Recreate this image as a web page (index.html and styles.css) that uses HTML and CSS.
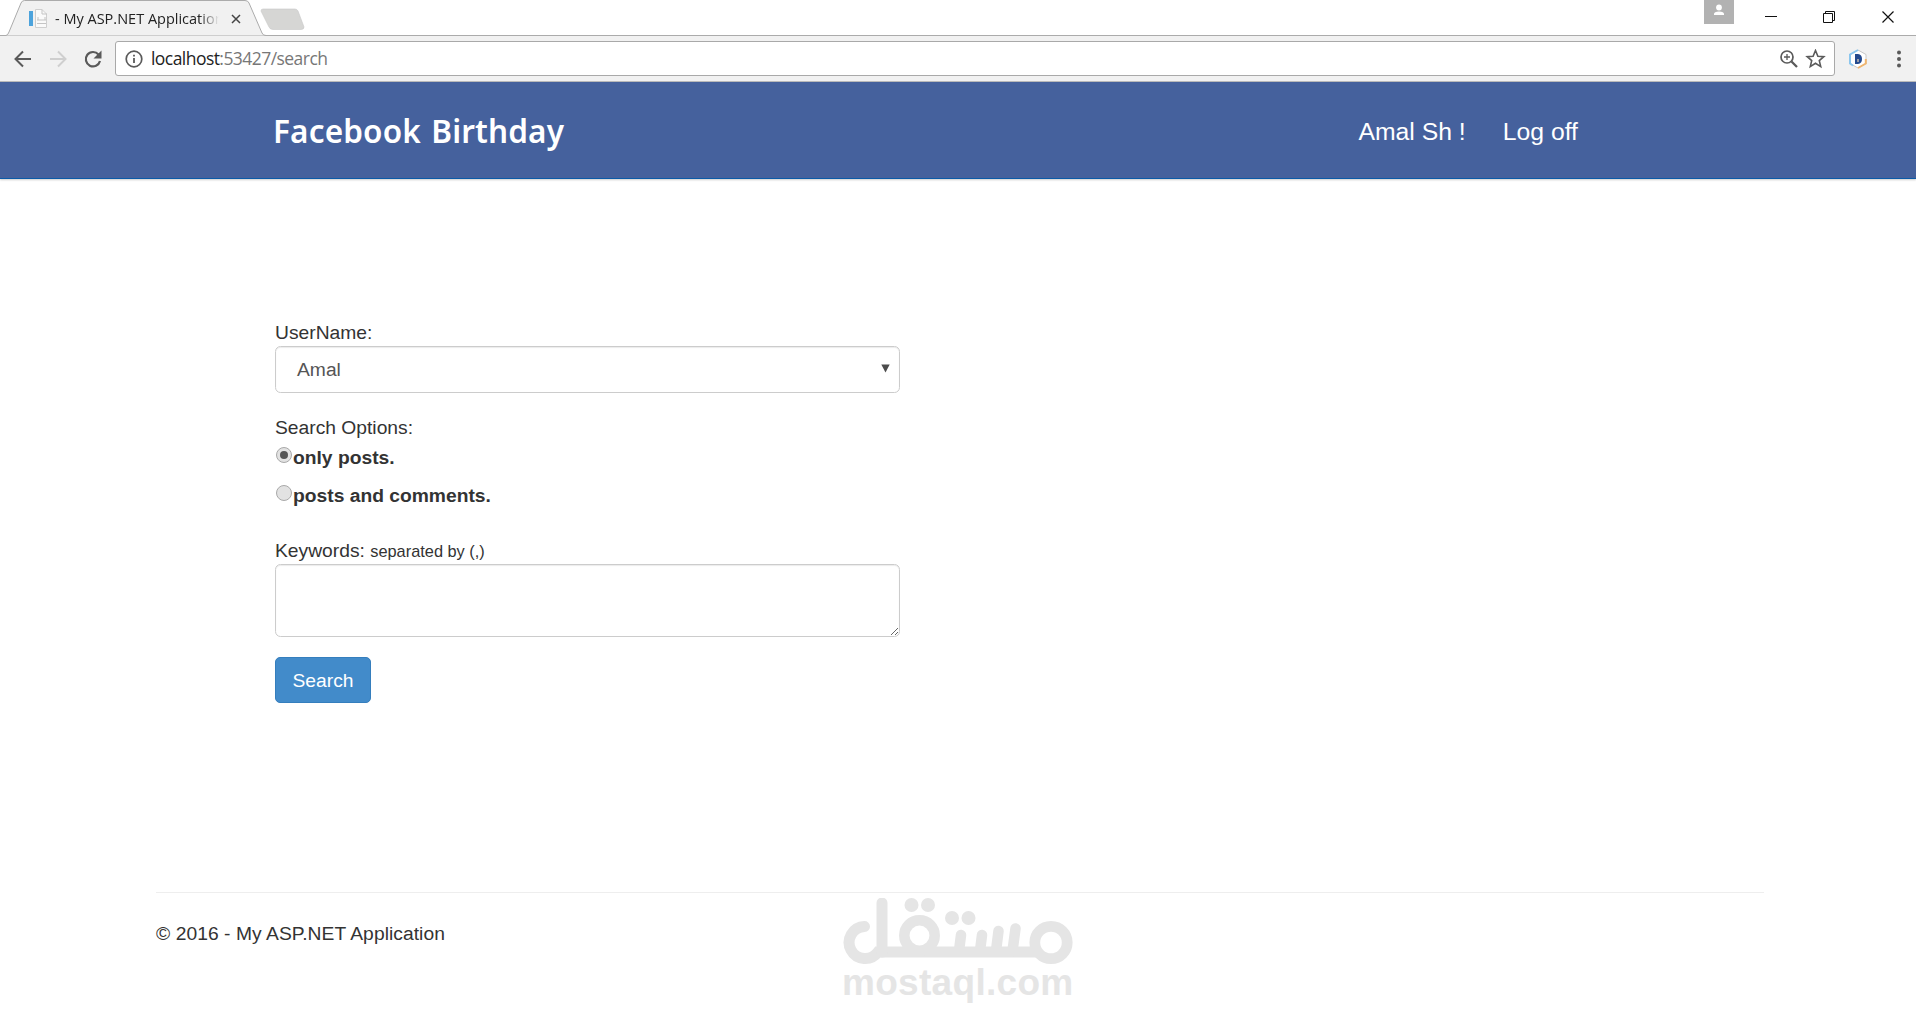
FILE: index.html
```html
<!DOCTYPE html>
<html lang="en">
<head>
<meta charset="utf-8">
<title>- My ASP.NET Application</title>
<link rel="stylesheet" href="styles.css">
</head>
<body>
<div class="tabstrip">
  <svg class="tabshape" width="310" height="36" viewBox="0 0 310 36">
    <path d="M0 35.500H6Q8 35 9 32L21 3Q22 .5 24.500 .5H245Q248 .5 249 3L262 33Q263 35.500 266 35.500H310V36H0Z" fill="#f1f1f1" stroke="#ababab"/>
    <path d="M263 9H295Q297 9 298 11L304 27Q304 29.500 301 29.500H273Q270 29.500 269 27L261 11Q261 9 263 9Z" fill="#d6d6d4" stroke="#c8c8c8" stroke-width=".6"/>
  </svg>
  <div class="tab">
    <svg class="favicon" width="20" height="20" viewBox="0 0 20 20"><path d="M1 2H5V17H1Z" fill="#4ca3dc"/><path d="M7.500.500H14L18.500 5V18.500H7.500Z" fill="#fafafa" stroke="#cfcfcf"/><path d="M14 .5V5H19M9 11H18M9 14.500H18M10 8V11M17 8V11" stroke="#c4c4c4" fill="none"/></svg>
    <span class="title">- My ASP.NET Application</span>
    <svg class="tabclose" width="10" height="10" viewBox="0 0 10 10"><path d="M1 1L9 9M9 1L1 9" stroke="#444" stroke-width="1.500"/></svg>
  </div>
  <div class="winctl">
    <span class="person"><svg width="30" height="24" viewBox="0 0 30 24"><circle cx="15" cy="7.500" r="2.900" fill="#fff"/><path d="M10 15V14Q10 11.500 15 11.500T20 14V15Z" fill="#fff"/></svg></span>
    <svg width="182" height="36" viewBox="0 0 182 36" fill="none" stroke="#111" stroke-width="1"><path d="M31 16.500H43"/><path d="M89.500 13.500H98.500V22.500H89.500ZM91.500 13V11.500H100.500V20.500H99"/><path d="M148.500 11.500L159.500 22.500M159.500 11.500L148.500 22.500" stroke-width="1.200"/></svg>
  </div>
</div>
<div class="toolbar">
  <svg class="navicons" width="115" height="44" viewBox="0 0 115 44" fill="none" stroke-width="2">
    <path d="M31 22H16M23 14.500L15.500 22L23 29.500" stroke="#5a5a5a"/>
    <path d="M50 22H65M58 14.500L65.500 22L58 29.500" stroke="#cfcfcf"/>
    <path d="M98.500 17.500A7.200 7.200 0 1 0 100 24" stroke="#5a5a5a" stroke-width="2.200"/><path d="M101.500 13.500V21.500H93.500Z" fill="#5a5a5a"/>
  </svg>
  <div class="omnibox">
    <svg width="18" height="18" viewBox="0 0 18 18"><circle cx="9" cy="9" r="7.800" fill="none" stroke="#5a5a5a" stroke-width="1.700"/><path d="M9 8V13M9 4.800V6.600" stroke="#5a5a5a" stroke-width="1.800"/></svg>
    <span class="url"><b>localhost</b>:53427/search</span>
    <svg class="boxicons" width="46" height="20" viewBox="0 0 46 20" fill="none" stroke="#5a5a5a"><circle cx="7" cy="8" r="6" stroke-width="1.700"/><path d="M4 8H10M7 5V11" stroke-width="1.300"/><path d="M11.500 12.500L17 18" stroke-width="2.300"/><path d="M35.500 1.500L37.900 7.300L43.800 7.700L39.300 11.600L40.700 17.600L35.500 14.300L30.300 17.600L31.700 11.600L27.200 7.700L33.100 7.300Z" stroke-width="1.600"/></svg>
  </div>
  <svg class="ext" width="20" height="20" viewBox="0 0 20 20"><path d="M10 1L18 5.500V14.500L10 19L2 14.500V5.500Z" fill="#fff" stroke="#c8c8c8"/><path d="M10 1L2 5.500V14.500L5 16.500" fill="none" stroke="#8bc6ee" stroke-width="2"/><path d="M17.800 10V14.500L10 19" fill="none" stroke="#efb56f" stroke-width="2"/><path d="M7 5H10Q14 5.500 14 10T10 15H7Z" fill="#244a8f"/><path d="M9 10H11V13H9Z" fill="#9a9da8"/></svg>
  <svg class="menu" width="6" height="20" viewBox="0 0 6 20" fill="#5a5a5a"><circle cx="3" cy="3.500" r="2"/><circle cx="3" cy="10" r="2"/><circle cx="3" cy="16.500" r="2"/></svg>
</div>
<header class="navbar">
  <span class="brand">Facebook Birthday</span>
  <nav><a>Amal Sh !</a><a>Log off</a></nav>
</header>
<main>
  <form class="form">
    <div class="label">UserName:</div>
    <div class="control select"><span>Amal</span><svg width="9" height="9" viewBox="0 0 9 9"><path d="M.3 .5H8.700L4.500 8.500Z" fill="#4c4c4c"/></svg></div>
    <div class="label options">Search Options:</div>
    <div class="radio"><i class="dot on"></i><span>only posts.</span></div>
    <div class="radio second"><i class="dot"></i><span>posts and comments.</span></div>
    <div class="label keywords">Keywords: <small>separated by (,)</small></div>
    <div class="control area"><svg width="9" height="9" viewBox="0 0 9 9"><path d="M1 8L8 1M5 8L8 5" stroke="#555" stroke-width=".9"/></svg></div>
    <div class="button">Search</div>
  </form>
</main>
<footer>© 2016 - My ASP.NET Application</footer>
<div class="watermark">
  <svg width="232" height="70" viewBox="0 0 232 70" fill="none" stroke="#e5e5e5" stroke-linecap="round">
    <path d="M22.500 28.500A16 16 0 1 0 36 54H208" stroke-width="11"/>
    <path d="M40 5V54" stroke-width="11"/>
    <circle cx="77.500" cy="37.500" r="15.200" stroke-width="10.500"/>
    <circle cx="209" cy="44.500" r="16.200" stroke-width="10.800" fill="#fff"/>
    <path d="M119 37L117 53M140 37L138 53M156.500 33L154 53M173.500 30.500L170.500 53" stroke-width="10.500"/>
    <g fill="#e5e5e5" stroke="none"><circle cx="69.500" cy="7" r="7"/><circle cx="86" cy="7" r="7"/><circle cx="110" cy="20" r="7"/><circle cx="126.500" cy="20" r="7"/></g>
  </svg>
  <span>mostaql.com</span>
</div>
</body>
</html>
```
FILE: styles.css
```css
* { box-sizing: border-box; }
body { margin: 0; height: 1023px; overflow: hidden; position: relative; background: #fff; color: #333; font: 19.25px/27.5px "Liberation Sans", Arial, sans-serif; }
svg { display: block; flex: none; }
.tabstrip { height: 36px; display: flex; justify-content: space-between; position: relative; border-bottom: 1px solid #ababab; }
.tabshape { position: absolute; left: 0; top: 0; }
.tab { position: relative; display: flex; align-items: center; height: 38px; padding-left: 28px; font: 14.5px/20px "Open Sans", sans-serif; color: #222; }
.title { width: 164px; margin-left: 7px; overflow: hidden; white-space: nowrap; letter-spacing: 0; -webkit-mask-image: linear-gradient(90deg, #000 88%, transparent); mask-image: linear-gradient(90deg, #000 88%, transparent); }
.tabclose { margin-left: 12px; }
.winctl { display: flex; }
.person { background: #b2b2b2; height: 24px; width: 30px; }
.toolbar { height: 46px; background: #f1f1f1; border-bottom: 1px solid #b8b8b8; display: flex; align-items: center; }
.omnibox { width: 1720px; height: 35px; display: flex; align-items: center; border: 1px solid #a9a9a9; border-radius: 3px; background: #fff; padding-left: 9px; }
.url { margin: -2px 0 0 8px; font: 17.5px/24px "Open Sans", sans-serif; color: #777; letter-spacing: -.55px; }
.url b { font-weight: 400; color: #222; }
.boxicons { margin-left: auto; margin-right: 8px; }
.ext { margin-left: 13px; }
.menu { margin-left: 28px; }
.navbar { height: 97px; background: #45619d; border-bottom: 1px solid #0a5aa8; box-shadow: 0 1px 2px #ccc; display: flex; justify-content: space-between; align-items: center; padding: 2px 338px 0 273px; color: #fff; }
.brand { font: 600 31.5px/44px "Noto Sans", sans-serif; letter-spacing: .15px; word-spacing: 2px; }
nav { display: flex; gap: 37px; margin-top: 1px; font-size: 24.75px; }
main { height: 713px; padding: 139px 156px 0 275px; }
.form { width: 625px; }
.label { height: 28px; padding-top: 1px; }
.control { border: 1px solid #ccc; border-radius: 5.5px; box-shadow: inset 0 1px 1px rgba(0,0,0,.08); display: flex; }
.select { height: 47px; align-items: center; justify-content: space-between; color: #555; padding: 0 9px 0 21px; }
.select svg { margin-top: -2px; }
.options { margin-top: 20px; }
.radio { height: 27px; margin-top: 2px; display: flex; align-items: center; font-weight: 700; }
.radio span { padding-top: 2px; }
.second { margin: 11px 0 28px; }
.dot { width: 16px; height: 16px; border: 1px solid #a9a9a9; border-radius: 50%; background: #e2e2e2; margin: 0 1px 4px 1px; display: grid; place-items: center; }
.on::after { content: ""; width: 8px; height: 8px; border-radius: 50%; background: #555; }
small { font-size: 16.36px; }
.area { height: 73px; justify-content: flex-end; align-items: flex-end; }
.button { width: 96px; height: 46px; margin-top: 20px; border: 1px solid #357ebd; border-radius: 5px; background: #428bca; color: #fff; text-align: center; line-height: 45px; }
footer { margin: 0 152px 0 156px; border-top: 1px solid #eee; padding-top: 27px; letter-spacing: .05px; }
.watermark { position: absolute; left: 842px; top: 898px; width: 234px; color: #e5e5e5; }
.watermark span { display: block; font: 700 37px/40px "Liberation Sans", Arial, sans-serif; margin-top: -5px; letter-spacing: .3px; }
```
